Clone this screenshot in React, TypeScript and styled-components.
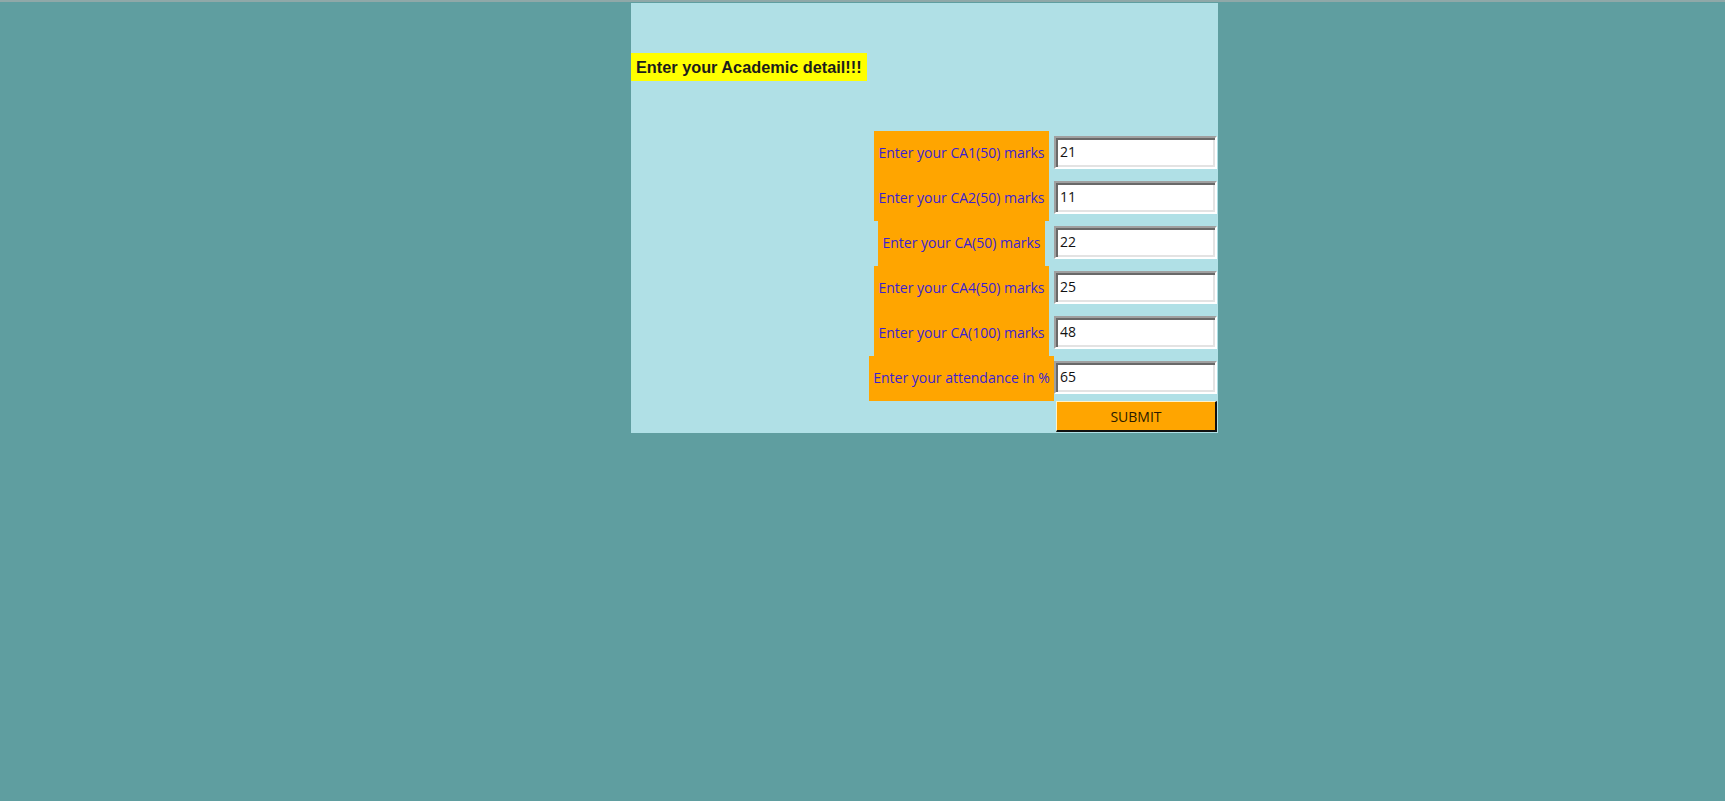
import React from "react";
import styled, { createGlobalStyle } from "styled-components";

const Global = createGlobalStyle`
  html, body {
    margin: 0;
    padding: 0;
    background: #5f9ea0;
  }
  body {
    font-family: "Open Sans", "Noto Sans", sans-serif;
  }
`;

const TopRule = styled.div`
  height: 2px;
  background: #8fa8a8;
`;

const Panel = styled.main`
  margin: 1px 0 0 631px;
  width: 587px;
  height: 430px;
  background: #b0e0e6;
  padding-top: 50px;
  box-sizing: border-box;
`;

const Title = styled.h1`
  display: inline-block;
  margin: 0;
  height: 28px;
  line-height: 28px;
  padding: 0 5px;
  background: #ffff00;
  color: #1c1c1c;
  font-family: "Liberation Sans", Arial, sans-serif;
  font-weight: bold;
  font-size: 16.3px;
`;

const Form = styled.form`
  margin: 50px 0 0 238px;
  display: grid;
  grid-template-columns: 185px 164px;
  grid-auto-rows: 45px;
`;

const Label = styled.label`
  justify-self: center;
  display: flex;
  align-items: center;
  height: 45px;
  box-sizing: border-box;
  padding: 0 4px 2px;
  background: #ffa500;
  color: #3c1fd2;
  font-family: "Open Sans", "Noto Sans", sans-serif;
  font-size: 14px;
  white-space: nowrap;
`;

const Entry = styled.input`
  align-self: start;
  margin-top: 5px;
  width: 163px;
  height: 33px;
  box-sizing: border-box;
  border: 2px solid;
  border-color: #a0a0a0 #ffffff #ffffff #a0a0a0;
  box-shadow: inset 2px 2px 0 #696969, inset -2px -2px 0 #e3e3e3;
  background: #ffffff;
  padding: 0 0 2px 4px;
  font-family: "Open Sans", "Noto Sans", sans-serif;
  font-size: 14px;
  color: #111;
  outline: none;
  caret-color: #000;
`;

const SubmitRow = styled.div`
  grid-column: 2;
  height: 32px;
`;

const Submit = styled.button`
  margin-left: 2px;
  width: 161px;
  height: 31px;
  box-sizing: border-box;
  background: #ffa500;
  border-style: solid;
  border-width: 1px 2px 2px 1px;
  border-color: #fff3c8 #111 #111 #fff3c8;
  color: #2a1a00;
  font-family: "Open Sans", "Noto Sans", sans-serif;
  font-size: 14px;
  padding: 0;
  cursor: pointer;
`;

const fields = [
  { label: "Enter your CA1(50) marks", value: "21" },
  { label: "Enter your CA2(50) marks", value: "11" },
  { label: "Enter your CA(50) marks", value: "22" },
  { label: "Enter your CA4(50) marks", value: "25" },
  { label: "Enter your CA(100) marks", value: "48" },
  { label: "Enter your attendance in %", value: "65" },
];

export default function App() {
  const last = fields.length - 1;
  return (
    <>
      <Global />
      <TopRule />
      <Panel>
        <Title>Enter your Academic detail!!!</Title>
        <Form onSubmit={(e) => e.preventDefault()}>
          {fields.map((f, i) => (
            <React.Fragment key={f.label}>
              <Label>{f.label}</Label>
              <Entry
                defaultValue={f.value}
                autoFocus={i === last}
                onFocus={(e) => {
                  const el = e.currentTarget;
                  const n = el.value.length;
                  el.setSelectionRange(n, n);
                }}
              />
            </React.Fragment>
          ))}
          <SubmitRow>
            <Submit type="submit">SUBMIT</Submit>
          </SubmitRow>
        </Form>
      </Panel>
    </>
  );
}
